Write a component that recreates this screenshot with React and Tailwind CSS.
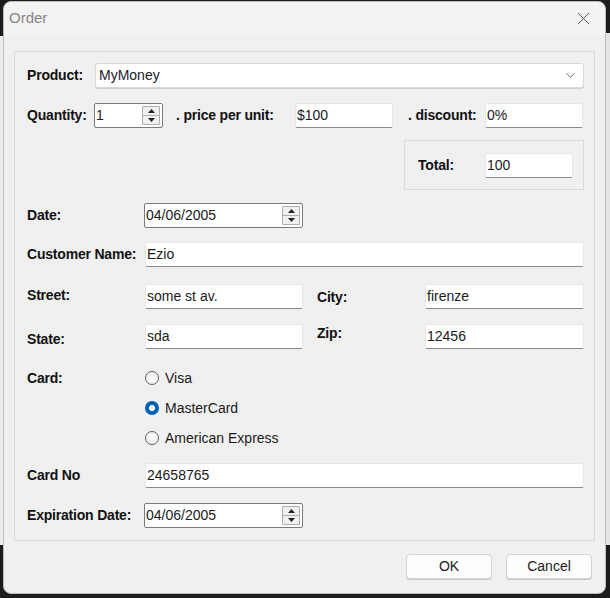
import { ChevronDown, X } from 'lucide-react'

const FONT = { fontFamily: '"Liberation Sans", Arial, sans-serif' }

function Label({ children, className = '' }) {
  return (
    <span className={`text-[14px] font-bold tracking-[-0.2px] text-[#111] ${className}`}>
      {children}
    </span>
  )
}

function TextBox({ value, className = '' }) {
  return (
    <div
      className={`h-[25px] flex items-center px-[1px] bg-white border border-[#e6e6e6] border-b-[#8a8a8a] rounded-[2px] text-[14px] text-[#1a1a1a] ${className}`}
    >
      {value}
    </div>
  )
}

function SpinBox({ value, className = '' }) {
  return (
    <div
      className={`h-[25px] flex items-center justify-between pl-[1px] pr-[2px] bg-white border border-[#7a7a7a] rounded-[2px] text-[14px] text-[#1a1a1a] ${className}`}
    >
      <span>{value}</span>
      <div className="flex flex-col w-[18px] h-[19px] border border-[#adadad] rounded-[1px] bg-[#f0f0f0]">
        <div className="flex-1 flex items-center justify-center border-b border-[#adadad]">
          <svg width="7" height="4" viewBox="0 0 7 4"><path d="M0 4 L3.5 0 L7 4 Z" fill="#222" /></svg>
        </div>
        <div className="flex-1 flex items-center justify-center">
          <svg width="7" height="4" viewBox="0 0 7 4"><path d="M0 0 L3.5 4 L7 0 Z" fill="#222" /></svg>
        </div>
      </div>
    </div>
  )
}

function Radio({ label, checked }) {
  return (
    <div className="h-[20px] flex items-center gap-[6px]">
      {checked ? (
        <span className="w-[14px] h-[14px] rounded-full bg-[#005fb8] flex items-center justify-center">
          <span className="w-[6px] h-[6px] rounded-full bg-white" />
        </span>
      ) : (
        <span className="w-[14px] h-[14px] rounded-full border border-[#5a5a5a] bg-[#f5f5f5]" />
      )}
      <span className="text-[14px] text-[#1a1a1a]">{label}</span>
    </div>
  )
}

function Button({ children }) {
  return (
    <div className="w-[86px] h-[25px] flex items-center justify-center bg-[#fdfdfd] border border-[#d4d4d4] rounded-[4px] text-[14px] text-[#1a1a1a] shadow-[0_1px_0_#c8c8c8]">
      {children}
    </div>
  )
}

export default function App() {
  return (
    <div className="relative w-[610px] h-[598px] bg-[#1c1c1c] overflow-hidden" style={FONT}>
      {/* bits of the window behind */}
      <div className="absolute left-0 top-[36px] w-[4px] h-[509px] bg-[#ececec]" />
      <div className="absolute right-0 top-[33px] w-[5px] h-[512px] bg-[#e4e4e4]" />

      <div className="relative ml-[3px] mt-[1px] w-[603px] h-[593px] bg-[#f0f0f0] rounded-[8px] border border-[#bdbdbd] flex flex-col overflow-hidden">
        {/* Title bar */}
        <div className="h-[33px] shrink-0 bg-[#f3f3f3] flex items-center justify-between pl-[5px] pr-[11px]">
          <span className="text-[15px] text-[#858585]">Order</span>
          <X className="w-[21px] h-[21px] text-[#5a5a5a]" strokeWidth={1.1} />
        </div>

        <div className="flex-1 flex flex-col px-[10px] pt-[16px]">
          {/* Group panel */}
          <div className="border border-[#dadada] pl-[12px] pr-[10px] pt-[11px] pb-[13px] flex flex-col">
            {/* Product */}
            <div className="h-[25px] flex items-center">
              <Label className="w-[68px]">Product:</Label>
              <div className="flex-1 h-[25px] flex items-center justify-between pl-[3px] pr-[5px] bg-white border border-[#d9d9d9] rounded-[3px] text-[14px] text-[#1a1a2e] shadow-[0_1px_0_#cfcfcf]">
                <span>MyMoney</span>
                <ChevronDown className="w-[15px] h-[15px] text-[#606060]" strokeWidth={1.5} />
              </div>
            </div>

            {/* Quantity / price / discount */}
            <div className="mt-[15px] h-[24px] flex items-center">
              <Label className="w-[67px]">Quantity:</Label>
              <SpinBox value="1" className="w-[69px]" />
              <Label className="ml-[13px] w-[119px]">. price per unit:</Label>
              <TextBox value="$100" className="w-[98px]" />
              <Label className="ml-[15px] w-[77px]">. discount:</Label>
              <TextBox value="0%" className="w-[98px]" />
            </div>

            {/* Total */}
            <div className="mt-[13px] flex justify-end">
              <div className="w-[180px] h-[50px] border border-[#dadada] flex items-center pl-[13px]">
                <Label className="w-[67px]">Total:</Label>
                <TextBox value="100" className="w-[88px]" />
              </div>
            </div>

            {/* Date */}
            <div className="mt-[13px] h-[24px] flex items-center">
              <Label className="w-[117px]">Date:</Label>
              <SpinBox value="04/06/2005" className="w-[159px]" />
            </div>

            {/* Customer */}
            <div className="mt-[15px] h-[25px] flex items-center">
              <Label className="w-[118px]">Customer Name:</Label>
              <TextBox value="Ezio" className="flex-1" />
            </div>

            {/* Street / City */}
            <div className="mt-[17px] h-[24px] flex items-center">
              <Label className="w-[118px] -mt-[2px]">Street:</Label>
              <TextBox value="some st av." className="w-[158px]" />
              <Label className="ml-[14px] w-[108px] mt-[2px]">City:</Label>
              <TextBox value="firenze" className="flex-1" />
            </div>

            {/* State / Zip */}
            <div className="mt-[16px] h-[24px] flex items-center">
              <Label className="w-[118px] mt-[6px]">State:</Label>
              <TextBox value="sda" className="w-[158px]" />
              <Label className="ml-[14px] w-[108px] -mt-[6px]">Zip:</Label>
              <TextBox value="12456" className="flex-1" />
            </div>

            {/* Card */}
            <div className="mt-[20px] flex">
              <div className="w-[118px] h-[20px] flex items-center">
                <Label>Card:</Label>
              </div>
              <div className="flex flex-col gap-[10px]">
                <Radio label="Visa" />
                <Radio label="MasterCard" checked />
                <Radio label="American Express" />
              </div>
            </div>

            {/* Card No */}
            <div className="mt-[15px] h-[25px] flex items-center">
              <Label className="w-[118px]">Card No</Label>
              <TextBox value="24658765" className="flex-1" />
            </div>

            {/* Expiration */}
            <div className="mt-[15px] h-[24px] flex items-center">
              <Label className="w-[117px]">Expiration Date:</Label>
              <SpinBox value="04/06/2005" className="w-[159px]" />
            </div>
          </div>

          {/* Buttons */}
          <div className="mt-[13px] flex justify-end gap-[14px] pr-[3px]">
            <Button>OK</Button>
            <Button>Cancel</Button>
          </div>
        </div>
      </div>
    </div>
  )
}
